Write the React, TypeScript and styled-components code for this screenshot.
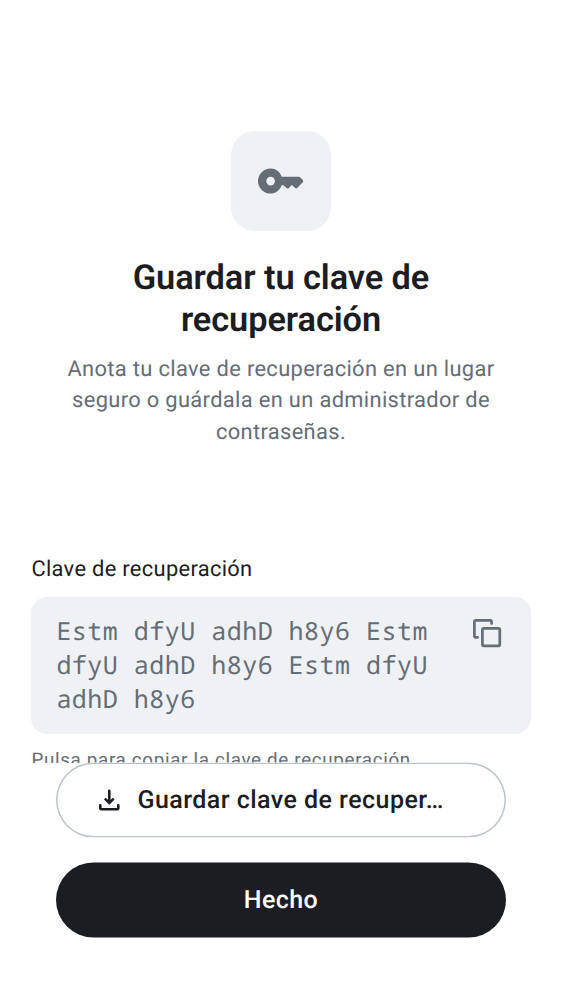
import React from 'react';
import styled, { createGlobalStyle } from 'styled-components';

const Global = createGlobalStyle`
  * { box-sizing: border-box; }
  html, body { margin: 0; background: #fff; overflow: hidden; }
  body { font-family: Roboto, sans-serif; color: #1b1d22; text-rendering: geometricPrecision; }
  button { text-rendering: inherit; }
`;
const Screen = styled.main`
  width: 562px; height: 1000px; display: flex; flex-direction: column; background: #fff;
`;
const Content = styled.section`
  height: 763px; padding: 131px 31px 0; overflow: hidden; flex: none;
`;
const Header = styled.header`
  height: 424px; display: flex; flex-direction: column; align-items: center; text-align: center;
`;
const IconTile = styled.div`
  width: 100px; height: 100px; border-radius: 24px; background: #f0f1f5; color: #656d77;
  display: flex; align-items: center; justify-content: center; flex: none;
`;
const Title = styled.h1`
  margin: 26px 0 0; font-size: 34.375px; line-height: 42.2px; letter-spacing: -0.08px; font-weight: 600; white-space: nowrap;
`;
const Subtitle = styled.p`
  margin: 12.6px 0 0; font-size: 21.875px; line-height: 31.25px; letter-spacing: 0.345px; color: #656d77; white-space: nowrap;
`;
const Label = styled.div`
  font-size: 21.875px; line-height: 30px; letter-spacing: 0.32px; padding-left: 0.4px;
`;
const KeyBox = styled.div`
  margin-top: 12px; height: 137px; padding: 17px 29px 17px 25.4px; border-radius: 16px; background: #f0f1f5;
  display: flex; justify-content: space-between; color: #656d77;
`;
const KeyText = styled.div`
  font-family: "Droid Sans Mono", "Noto Sans Mono", "DejaVu Sans Mono", monospace;
  font-size: 25px; line-height: 34.2px; letter-spacing: 0.48px; white-space: nowrap;
`;
const CopyButton = styled.button`
  border: 0; padding: 0; margin-top: 4px; background: none; color: inherit; width: 30px; height: 30px;
`;
const Hint = styled.div`
  margin-top: 12px; font-size: 18.75px; line-height: 28px; letter-spacing: 0.69px; padding-left: 0.4px; color: #656d77; white-space: nowrap;
`;
const Actions = styled.footer`
  padding: 0 56px; display: flex; flex-direction: column; gap: 25px; transform: translateY(-0.5px);
`;
const Button = styled.button<{ $primary?: boolean }>`
  height: 75px; border-radius: 38px; background: ${p => (p.$primary ? '#1b1d22' : '#fff')};
  border: 0; box-shadow: ${p => (p.$primary ? 'none' : 'inset 0 0 0 1.5px #bdc4cc')};
  color: ${p => (p.$primary ? '#fff' : '#1b1d22')};
  font: 500 25px/36px Roboto, sans-serif; letter-spacing: ${p => (p.$primary ? '0.4px' : '0.46px')}; padding: 0 42px;
  display: flex; align-items: center; justify-content: ${p => (p.$primary ? 'center' : 'flex-start')}; gap: 16.4px;
`;

export default function App() {
  return (
    <Screen>
      <Global />
      <Content>
        <Header>
          <IconTile>
            <svg width="50" height="50" viewBox="0 0 50 50" fill="currentColor" fillRule="evenodd">
              <path d="M14.6 12.6c5.1 0 9.2 3.1 11.2 8.2h17c.6 0 1.1.2 1.5.6l2.3 2.3c.8.8.8 1.9 0 2.7l-5.4 5.7c-.6.6-1.4.6-2 0L35.8 29l-2.9 3c-.7.7-1.7.7-2.4 0l-3-2.7h-1.7c-2 5.1-6.1 8.3-11.2 8.3A12.5 12.5 0 0 1 2 25.1a12.5 12.5 0 0 1 12.6-12.5Zm0 8.2a4.3 4.3 0 1 0 0 8.6 4.3 4.3 0 0 0 0-8.6Z" />
            </svg>
          </IconTile>
          <Title>Guardar tu clave de<br />recuperación</Title>
          <Subtitle>Anota tu clave de recuperación en un lugar<br />seguro o guárdala en un administrador de<br />contraseñas.</Subtitle>
        </Header>
        <Label>Clave de recuperación</Label>
        <KeyBox>
          <KeyText>Estm dfyU adhD h8y6 Estm<br />dfyU adhD h8y6 Estm dfyU<br />adhD h8y6</KeyText>
          <CopyButton aria-label="Copiar">
            <svg width="30" height="30" viewBox="0 0 30 30" fill="none" stroke="currentColor" strokeWidth="2.7" strokeLinecap="round" strokeLinejoin="round">
              <rect x="10.4" y="10.4" width="17.4" height="17.4" rx="1.2" />
              <path d="M5.6 19.4H3.6a1.2 1.2 0 0 1-1.2-1.2V3.6a1.2 1.2 0 0 1 1.2-1.2h14.8a1.2 1.2 0 0 1 1.2 1.2v2" />
            </svg>
          </CopyButton>
        </KeyBox>
        <Hint>Pulsa para copiar la clave de recuperación</Hint>
      </Content>
      <Actions>
        <Button>
          <svg width="23" height="23" viewBox="0 0 23 23" fill="none" stroke="currentColor" strokeWidth="2.6" strokeLinecap="round" strokeLinejoin="round">
            <path d="M11.3 2.4v11.2" />
            <path d="m6.9 10.1 4.4 4.4 4.4-4.4" strokeLinecap="butt" strokeLinejoin="miter" />
            <path d="M2.3 16.8v2.9c0 .6.4 1 1 1h16c.6 0 1-.4 1-1v-2.9" />
          </svg>
          Guardar clave de recuper…
        </Button>
        <Button $primary>Hecho</Button>
      </Actions>
    </Screen>
  );
}
